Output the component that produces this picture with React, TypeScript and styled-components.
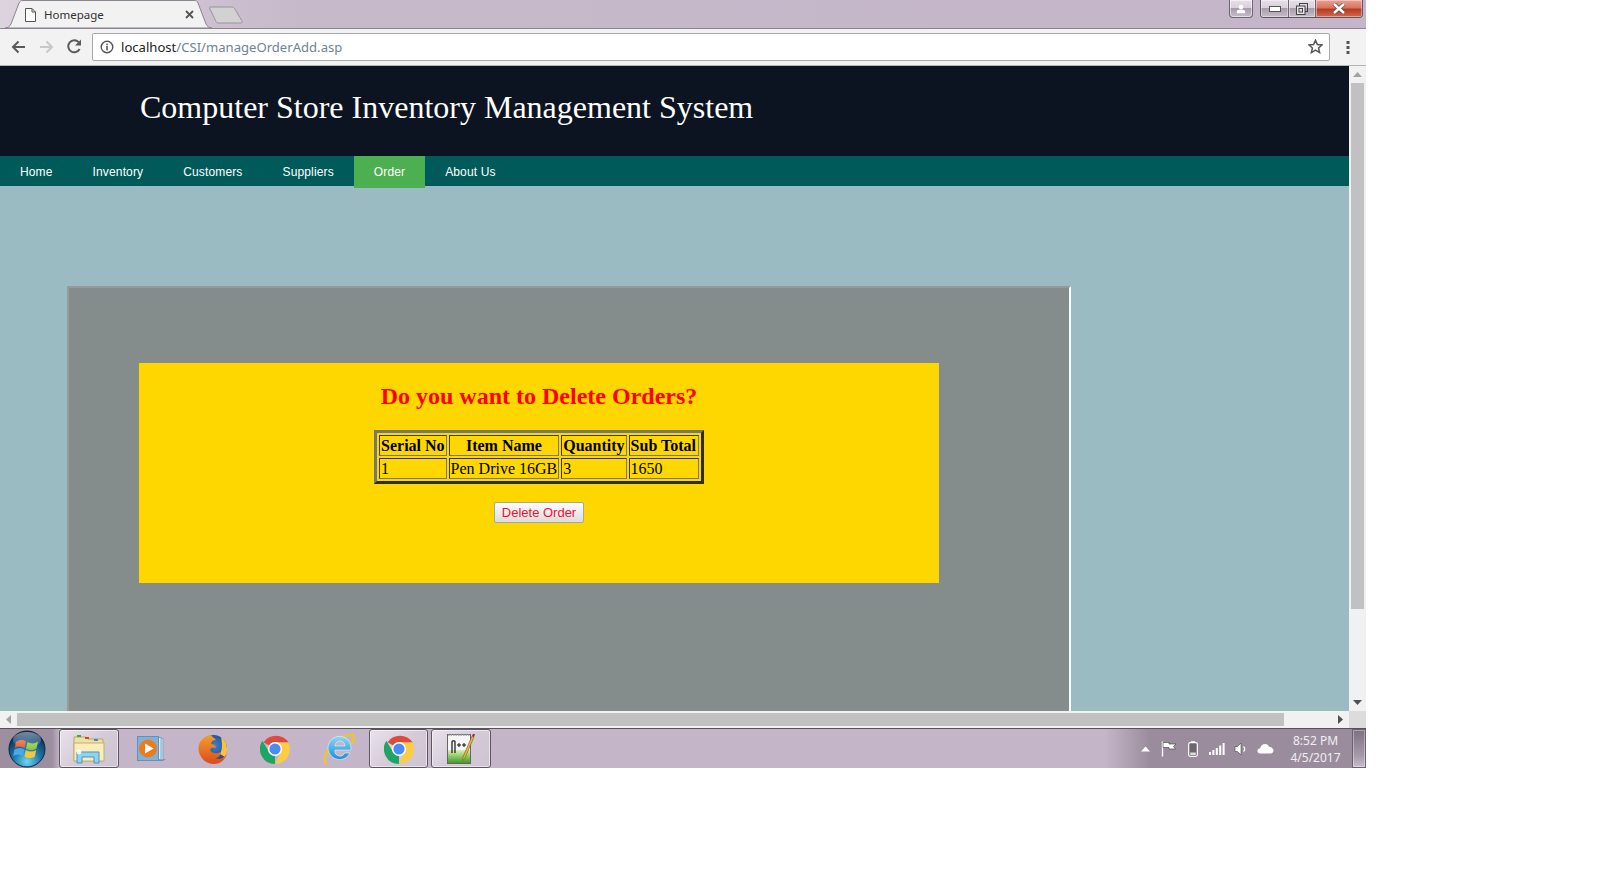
import React from "react";
import styled, { createGlobalStyle } from "styled-components";

const Global = createGlobalStyle`
  html, body { margin: 0; padding: 0; background: #fff; }
  body { width: 1600px; height: 873px; overflow: hidden; font-family: "Liberation Sans", Arial, sans-serif; }
`;

const Screen = styled.div`
  width: 1366px; height: 768px; display: flex; flex-direction: column; overflow: hidden;
`;

/* ---------- browser chrome ---------- */
const TabStrip = styled.div`
  height: 29px; flex: none; display: flex; align-items: flex-start; box-sizing: border-box;
  background: linear-gradient(90deg, #dcd3df 0, #c6b9ca 22%, #c4b6c8 100%);
  border-bottom: 1px solid #8c8490;
`;
const Tab = styled.div`
  position: relative; width: 207px; height: 28px; margin-left: 5px; flex: none;
  display: flex; align-items: center; padding: 1px 0 0 20px; box-sizing: border-box;
  font: 11.5px "Noto Sans", "Open Sans", sans-serif; color: #333;
`;
const TabShape = styled.svg`
  position: absolute; left: 0; top: 0;
`;
const TabIcon = styled.svg`
  position: relative; flex: none; margin-right: 8px;
`;
const TabTitle = styled.span`
  position: relative; flex: 1;
`;
const TabClose = styled.svg`
  position: relative; flex: none; margin-right: 18px;
`;
const NewTab = styled.svg`
  flex: none; margin: 6px 0 0 -3px;
`;
const Spacer = styled.div`
  flex: 1;
`;
const CaptionProfile = styled.div`
  width: 24px; height: 18px; box-sizing: border-box; margin-right: 7px; display: flex; align-items: center; justify-content: center;
  border: 1px solid #6e6672; border-top: none; border-radius: 0 0 4px 4px;
  box-shadow: inset 0 0 0 1px rgba(255,255,255,.55);
  background: linear-gradient(#e6dfe8 0, #d9d0db 45%, #a89cab 50%, #c6bcc8 100%);
`;
const CaptionGroup = styled.div`
  width: 103px; height: 18px; box-sizing: border-box; margin-right: 3px; display: flex;
  border: 1px solid #5c5560; border-top: none; border-radius: 0 0 4px 4px; overflow: hidden;
`;
const CaptionButton = styled.div<{ $w: number; $close?: boolean }>`
  width: ${p => p.$w}px; flex: ${p => (p.$close ? "1" : "none")}; display: flex; align-items: center; justify-content: center; box-sizing: border-box;
  border-right: ${p => (p.$close ? "none" : "1px solid #6e6672")};
  background: ${p => p.$close
    ? "linear-gradient(#e9a294 0, #d9735f 45%, #b83a22 55%, #cf6a50 100%)"
    : "linear-gradient(#e6dfe8 0, #d9d0db 45%, #a89cab 50%, #c6bcc8 100%)"};
  box-shadow: inset 0 0 0 1px rgba(255,255,255,.4);
`;

const Toolbar = styled.div`
  height: 37px; flex: none; box-sizing: border-box; background: #f2f2f2; display: flex; align-items: center;
  border-bottom: 1px solid #b4b4b4; padding: 0 0 1px 11px;
`;
const NavIcon = styled.svg`
  flex: none; margin-right: 13px;
`;
const Omnibox = styled.div`
  width: 1238px; height: 28px; flex: none; margin-left: -3px; box-sizing: border-box; background: #fff;
  border: 1px solid #a9a9a9; border-radius: 2px; display: flex; align-items: center; padding: 0 6px 0 7px;
`;
const UrlInfo = styled.svg`
  flex: none; margin-right: 7px;
`;
const Url = styled.div`
  flex: 1; font: 13.1px "Noto Sans", "Open Sans", sans-serif; color: #6f8490; white-space: nowrap;
`;
const UrlHost = styled.span`
  color: #222;
`;
const MenuDots = styled.svg`
  flex: none; margin-left: 16px;
`;

/* ---------- viewport ---------- */
const Viewport = styled.div`
  flex: 1; min-height: 0; display: flex;
`;
const ViewColumn = styled.div`
  flex: 1; min-width: 0; display: flex; flex-direction: column;
`;
const Page = styled.div`
  flex: 1; min-height: 0; overflow: hidden; background: #9abbc1;
`;
const Header = styled.header`
  height: 90px; background: #0c1421; box-sizing: border-box; padding: 19px 0 0 140px;
`;
const Title = styled.h1`
  margin: 0; font: 400 32px/44px "Liberation Serif", "Times New Roman", serif; color: #fff; white-space: nowrap;
`;
const Nav = styled.nav`
  height: 30px; background: #005a5a; display: flex; align-items: flex-start;
`;
const NavItem = styled.a<{ $active?: boolean }>`
  padding: 0 20px; height: ${p => (p.$active ? 32 : 30)}px; flex: none;
  font: 12px/33px "Liberation Sans", Arial, sans-serif; letter-spacing: .14px; color: #fff;
  background: ${p => (p.$active ? "#4caf50" : "transparent")};
`;
const Panel = styled.section`
  width: 1004px; height: 600px; margin: 100px 0 0 67px; box-sizing: border-box; background: #858c8c;
  border: 2px solid #999; border-right-color: #fff; border-bottom: none;
  padding: 75px 0 0 70px;
`;
const Card = styled.div`
  width: 800px; height: 220px; background: #ffd700; display: flex; flex-direction: column; align-items: center; padding-top: 19px; box-sizing: border-box;
`;
const Question = styled.h2`
  margin: 0 0 20px; font: 700 24px/28px "Liberation Serif", "Times New Roman", serif; color: #f00;
`;
const OrderTable = styled.table`
  border: 3px solid; border-color: #777 #2c2c2c #2c2c2c #777; border-spacing: 2px; border-collapse: separate;
  font: 16px/17px "Liberation Serif", "Times New Roman", serif; color: #000;
`;
const HeadCell = styled.th<{ $padRight?: number }>`
  border: 1px solid; border-color: #333 #777 #777 #333; padding: 1px ${p => p.$padRight ?? 1}px 1px 1px; font-weight: 700; white-space: nowrap;
`;
const Cell = styled.td`
  border: 1px solid; border-color: #333 #777 #777 #333; padding: 1px; white-space: nowrap;
`;
const DeleteButton = styled.button`
  margin-top: 18px; width: 90px; height: 21px; padding: 0; box-sizing: border-box;
  font: 13px "Liberation Sans", Arial, sans-serif; color: #f01030;
  border: 1px solid #a6a6a6; border-radius: 2px; background: linear-gradient(#fdfdfd, #dcdcdc);
`;

/* ---------- scrollbars ---------- */
const HScroll = styled.div`
  height: 17px; flex: none; background: #f1f1f1; display: flex; align-items: center;
`;
const HThumb = styled.div`
  width: 1267px; height: 13px; background: #c1c1c1; flex: none;
`;
const ScrollArrow = styled.svg`
  flex: none; display: block;
`;
const ArrowSlot = styled.div`
  width: 17px; height: 17px; flex: none; display: flex; align-items: center; justify-content: center;
`;
const VScroll = styled.div`
  width: 17px; flex: none; background: #f1f1f1; display: flex; flex-direction: column; align-items: center;
`;
const VThumb = styled.div`
  width: 13px; height: 526px; background: #c1c1c1; flex: none;
`;
const VTrack = styled.div`
  flex: 1;
`;
const Corner = styled.div`
  height: 17px; width: 17px; flex: none; background: #dcdcdc;
`;

/* ---------- taskbar ---------- */
const Taskbar = styled.div`
  height: 40px; flex: none; display: flex; align-items: stretch; box-sizing: border-box;
  border-top: 1px solid #55505a;
  background: linear-gradient(90deg, #9d8f9f 0, #9d8f9f 52px, #c4b6c8 60px, #c4b6c8 1105px, #9a8c9c 1150px, #9a8c9c 100%);
`;
const Orb = styled.div`
  width: 59px; flex: none; display: flex; align-items: center; padding-left: 8px; box-sizing: border-box;
`;
const TaskButton = styled.div<{ $active?: boolean; $w?: number; $gap?: number }>`
  width: ${p => p.$w ?? 60}px; flex: none; margin-right: ${p => p.$gap ?? 0}px; display: flex; align-items: center; justify-content: center; box-sizing: border-box;
  border-radius: 3px;
  ${p => p.$active ? `
    border: 1px solid #5d5762;
    box-shadow: inset 0 0 0 1px rgba(255,255,255,.5);
    background: linear-gradient(135deg, #e8e2ea 0, #d4cad7 55%, #cfc4d2 100%);
  ` : ""}
`;
const Tray = styled.div`
  flex: 1; display: flex; align-items: stretch; justify-content: flex-end;
`;
const TraySlot = styled.div`
  width: 24px; flex: none; display: flex; align-items: center; justify-content: center;
`;
const Clock = styled.div`
  width: 75px; flex: none; align-self: center; box-sizing: border-box; padding-left: 2px; text-align: center; font: 12px/17px "Noto Sans", "Open Sans", sans-serif; color: #f1eef2;
`;
const ShowDesktop = styled.div`
  width: 14px; flex: none; box-sizing: border-box; border: 1px solid #6a626e;
  box-shadow: inset 0 0 0 1px rgba(255,255,255,.35);
  background: linear-gradient(#7d7080, #a79aaa 70%, #c8bccb);
`;

const ChromeIcon = () => (
  <svg width="30" height="30" viewBox="0 0 30 30">
    <path d="M15 15 L3.6 8.2 A15 15 0 0 1 28.6 8.6 L15 8.6 Z" fill="#dd4b3e" />
    <path d="M15 15 L15 30 A15 15 0 0 1 2.4 6.8 L9.3 18.4 Z" fill="#1fa463" />
    <path d="M15 8.6 L28.4 8.6 A15 15 0 0 1 15.2 30 L20.6 18.2 Z" fill="#fdcd3f" />
    <circle cx="15" cy="15" r="7" fill="#fff" />
    <circle cx="15" cy="15" r="5.6" fill="#4b8bf4" />
  </svg>
);

export default function App() {
  return (
    <>
      <Global />
      <Screen>
        <TabStrip>
          <Tab>
            <TabShape width="207" height="28" viewBox="0 0 207 28">
              <path d="M0 28 C3 28 5 26 6 24 L14 3 C15 1 16 .5 18 .5 L189 .5 C191 .5 192 1 193 3 L201 24 C202 26 204 28 207 28 Z" fill="#f2f2f2" stroke="#8c8490" />
            </TabShape>
            <TabIcon width="11" height="14" viewBox="0 0 11 14">
              <path d="M1 .5 H7 L10.5 4 V13.5 H.5 V.5 Z M7 .5 V4 H10.5" fill="#fff" stroke="#555" />
            </TabIcon>
            <TabTitle>Homepage</TabTitle>
            <TabClose width="9" height="9" viewBox="0 0 9 9">
              <path d="M1 1 L8 8 M8 1 L1 8" stroke="#555" strokeWidth="1.8" />
            </TabClose>
          </Tab>
          <NewTab width="35" height="18" viewBox="0 0 35 18">
            <path d="M.8 1 H23 C24 1 25 1.5 25.5 2.5 L33 15 C33.5 16 33 17 32 17 H9 C8 17 7.5 16.5 7 15.5 L.5 2 C.2 1.4 .3 1 .8 1 Z" fill="#d2d2d2" stroke="#9a949e" />
          </NewTab>
          <Spacer />
          <CaptionProfile>
            <svg width="10" height="10" viewBox="0 0 12 11">
              <circle cx="6" cy="3.2" r="2.8" fill="#fff" />
              <path d="M1 10.5 V8.5 C1 7 3 6.5 6 6.5 C9 6.5 11 7 11 8.5 V10.5 Z" fill="#fff" />
            </svg>
          </CaptionProfile>
          <CaptionGroup>
            <CaptionButton $w={28}>
              <svg width="12" height="6" viewBox="0 0 12 6"><rect x=".5" y=".5" width="11" height="5" fill="#fff" stroke="#555" /></svg>
            </CaptionButton>
            <CaptionButton $w={27}>
              <svg width="12" height="12" viewBox="0 0 12 12">
                <rect x="3.5" y=".5" width="8" height="8" fill="none" stroke="#444" />
                <rect x=".5" y="3" width="8.5" height="8.5" fill="#e8e2ea" stroke="#444" />
                <rect x="3" y="5.5" width="3.5" height="3.5" fill="none" stroke="#444" />
              </svg>
            </CaptionButton>
            <CaptionButton $w={48} $close>
              <svg width="14" height="11" viewBox="0 0 14 11">
                <path d="M2 1 L12 10 M12 1 L2 10" stroke="#555" strokeWidth="4" />
                <path d="M2 1 L12 10 M12 1 L2 10" stroke="#fff" strokeWidth="2.4" />
              </svg>
            </CaptionButton>
          </CaptionGroup>
        </TabStrip>

        <Toolbar>
          <NavIcon width="15" height="14" viewBox="0 0 15 14">
            <path d="M14 7 H2.5 M7.5 1.5 L2 7 L7.5 12.5" fill="none" stroke="#5a5a5a" strokeWidth="2" />
          </NavIcon>
          <NavIcon width="15" height="14" viewBox="0 0 15 14">
            <path d="M1 7 H12.5 M7.5 1.5 L13 7 L7.5 12.5" fill="none" stroke="#c8c8c8" strokeWidth="2" />
          </NavIcon>
          <NavIcon width="15" height="15" viewBox="0 0 15 15">
            <path d="M12.6 10 A6 6 0 1 1 11.7 3.2" fill="none" stroke="#5a5a5a" strokeWidth="2" />
            <path d="M14 .5 V6.6 H8 Z" fill="#5a5a5a" />
          </NavIcon>
          <Omnibox>
            <UrlInfo width="14" height="14" viewBox="0 0 14 14">
              <circle cx="7" cy="7" r="5.8" fill="none" stroke="#555" strokeWidth="1.4" />
              <rect x="6.2" y="6" width="1.6" height="4.4" fill="#555" />
              <rect x="6.2" y="3.6" width="1.6" height="1.6" fill="#555" />
            </UrlInfo>
            <Url><UrlHost>localhost</UrlHost>/CSI/manageOrderAdd.asp</Url>
            <svg width="15" height="15" viewBox="0 0 15 15">
              <path d="M7.5 1.2 L9.4 5.5 L14 6 L10.6 9 L11.6 13.6 L7.5 11.2 L3.4 13.6 L4.4 9 L1 6 L5.6 5.5 Z" fill="none" stroke="#555" strokeWidth="1.5" />
            </svg>
          </Omnibox>
          <MenuDots width="4" height="14" viewBox="0 0 4 14">
            <rect x=".5" y="1" width="3" height="3" fill="#555" />
            <rect x=".5" y="6" width="3" height="3" fill="#555" />
            <rect x=".5" y="11" width="3" height="3" fill="#555" />
          </MenuDots>
        </Toolbar>

        <Viewport>
          <ViewColumn>
            <Page>
              <Header><Title>Computer Store Inventory Management System</Title></Header>
              <Nav>
                <NavItem>Home</NavItem>
                <NavItem>Inventory</NavItem>
                <NavItem>Customers</NavItem>
                <NavItem>Suppliers</NavItem>
                <NavItem $active>Order</NavItem>
                <NavItem>About Us</NavItem>
              </Nav>
              <Panel>
                <Card>
                  <Question>Do you want to Delete Orders?</Question>
                  <OrderTable>
                    <thead>
                      <tr>
                        <HeadCell>Serial No</HeadCell>
                        <HeadCell>Item Name</HeadCell>
                        <HeadCell>Quantity</HeadCell>
                        <HeadCell $padRight={2}>Sub Total</HeadCell>
                      </tr>
                    </thead>
                    <tbody>
                      <tr>
                        <Cell>1</Cell>
                        <Cell>Pen Drive 16GB</Cell>
                        <Cell>3</Cell>
                        <Cell>1650</Cell>
                      </tr>
                    </tbody>
                  </OrderTable>
                  <DeleteButton>Delete Order</DeleteButton>
                </Card>
              </Panel>
            </Page>
            <HScroll>
              <ArrowSlot><ScrollArrow width="5" height="9" viewBox="0 0 5 9"><path d="M5 0 V9 L0 4.5 Z" fill="#a3a3a3" /></ScrollArrow></ArrowSlot>
              <HThumb />
              <Spacer />
              <ArrowSlot><ScrollArrow width="5" height="9" viewBox="0 0 5 9"><path d="M0 0 V9 L5 4.5 Z" fill="#505050" /></ScrollArrow></ArrowSlot>
            </HScroll>
          </ViewColumn>
          <VScroll>
            <ArrowSlot><ScrollArrow width="9" height="5" viewBox="0 0 9 5"><path d="M0 5 H9 L4.5 0 Z" fill="#a3a3a3" /></ScrollArrow></ArrowSlot>
            <VThumb />
            <VTrack />
            <ArrowSlot><ScrollArrow width="9" height="5" viewBox="0 0 9 5"><path d="M0 0 H9 L4.5 5 Z" fill="#505050" /></ScrollArrow></ArrowSlot>
            <Corner />
          </VScroll>
        </Viewport>

        <Taskbar>
          <Orb>
            <svg width="38" height="38" viewBox="0 0 38 38">
              <defs>
                <radialGradient id="orbg" cx="50%" cy="85%" r="75%">
                  <stop offset="0" stopColor="#6fd6f2" />
                  <stop offset=".5" stopColor="#1b78ab" />
                  <stop offset="1" stopColor="#0c2f58" />
                </radialGradient>
                <linearGradient id="orbgloss" x1="0" y1="0" x2="0" y2="1">
                  <stop offset="0" stopColor="#fff" stopOpacity=".45" />
                  <stop offset="1" stopColor="#fff" stopOpacity=".05" />
                </linearGradient>
              </defs>
              <circle cx="19" cy="19" r="18" fill="url(#orbg)" stroke="#0d2440" />
              <path d="M8 12 C11.5 9.5 15 9.5 18 11.5 L16.5 18 C13.5 16 10 16 6.8 18 Z" fill="#ea5a2e" />
              <path d="M19.5 12 C23 14 26.5 14 30 11.5 L28.5 18.5 C25 20.5 21.5 20.5 18 18.5 Z" fill="#8fc93f" />
              <path d="M6.5 19.5 C10 17.5 13 17.5 16.2 19.5 L15 26 C12 24 8.5 24 5.2 26 Z" fill="#4aa8e8" />
              <path d="M17.7 20 C21 22 24.5 22 28.2 20 L26.8 26.8 C23.5 28.6 20 28.6 16.5 26.5 Z" fill="#f6c63a" />
              <ellipse cx="19" cy="10" rx="14" ry="8" fill="url(#orbgloss)" />
            </svg>
          </Orb>
          <TaskButton $active>
            <svg width="32" height="30" viewBox="0 0 32 30">
              <path d="M1 3 H13 L15 5 H30 V27 H1 Z" fill="#efe2a0" stroke="#b9a765" />
              <path d="M1 9 H31 V27 H1 Z" fill="#f8edbb" stroke="#c4b06c" />
              <rect x="4" y="1" width="4" height="2" fill="#2bb34a" />
              <rect x="12" y="3" width="4" height="2" fill="#d6402c" />
              <rect x="21" y="5" width="4" height="2" fill="#2d8fe0" />
              <path d="M4 29 V18 H26 V29 H21 V23 H9 V29 Z" fill="#8fd2f2" stroke="#4a93c4" />
              <circle cx="6" cy="18" r="2.4" fill="#fff" opacity=".85" />
            </svg>
          </TaskButton>
          <TaskButton $w={66}>
            <svg width="30" height="26" viewBox="0 0 30 26">
              <path d="M22 23 H29 L26 25 H22 Z" fill="#8f8494" />
              <rect x="9" y="2.5" width="17" height="21" fill="#cfe1ef" stroke="#7fa8c6" />
              <rect x="7" y="1.5" width="17" height="22" fill="#dfeaf3" stroke="#7fa8c6" />
              <rect x=".5" y=".5" width="21" height="24" fill="#7fb2d6" stroke="#5e93bb" />
              <circle cx="11" cy="12.5" r="9" fill="#ee7a1a" />
              <path d="M8 7.5 L16.5 12.5 L8 17.5 Z" fill="#fff" />
            </svg>
          </TaskButton>
          <TaskButton $w={56}>
            <svg width="30" height="30" viewBox="0 0 30 30">
              <defs>
                <radialGradient id="fxglobe" cx="55%" cy="40%" r="60%">
                  <stop offset="0" stopColor="#3f7fd0" />
                  <stop offset="1" stopColor="#173f86" />
                </radialGradient>
                <linearGradient id="fxfox" x1="0" y1="0" x2="0" y2="1">
                  <stop offset="0" stopColor="#f2a02a" />
                  <stop offset="1" stopColor="#dd4a1c" />
                </linearGradient>
              </defs>
              <circle cx="15.5" cy="14.5" r="13.5" fill="url(#fxglobe)" />
              <path d="M23 3 C29 7 31 16 27 23 L22 20 C25 14 24 8 23 3 Z" fill="#f7c43a" />
              <path d="M13 1 C7 2 2 6 .6 12 C-.5 20 5 30 16 30 C23 30 28 25 29 19 C27 24 21 26 17 24 C21 24 23 21 22 18 C20 20 14 20 12 16 C13 13 16 14 18 14 C18 11 15 10 13 10 C13 8 15 6 18 6 C16 3 14 3 13 1 Z" fill="url(#fxfox)" />
            </svg>
          </TaskButton>
          <TaskButton $w={68}><ChromeIcon /></TaskButton>
          <TaskButton $w={60}>
            <svg width="32" height="32" viewBox="0 0 32 32">
              <defs>
                <linearGradient id="iee" x1="0" y1="0" x2="0" y2="1">
                  <stop offset="0" stopColor="#8ad8f7" />
                  <stop offset="1" stopColor="#1a8ed6" />
                </linearGradient>
              </defs>
              <path d="M4 31 C1 30 1 25 4 19 C8 11 17 4 25 2 C29 1 31 2 31 5 C31 7 30 9 28 11" fill="none" stroke="#f5c518" strokeWidth="2.2" />
              <path d="M7.5 22 A11.5 11.5 0 1 1 27.8 17 H12 A5 5 0 0 0 21.5 20 H27 A11.5 11.5 0 0 1 7.5 22 Z M12 13 H22 A5 5 0 0 0 12 13 Z" fill="url(#iee)" fillRule="evenodd" stroke="#fff" strokeWidth=".5" />
            </svg>
          </TaskButton>
          <TaskButton $active $w={59} $gap={3}><ChromeIcon /></TaskButton>
          <TaskButton $active $w={60}>
            <svg width="32" height="32" viewBox="0 0 32 32">
              <defs>
                <linearGradient id="nppg" x1="0" y1="0" x2="0" y2="1">
                  <stop offset="0" stopColor="#dcf0b4" />
                  <stop offset="1" stopColor="#3f9e1e" />
                </linearGradient>
              </defs>
              <rect x="2.5" y="1.5" width="23" height="29" fill="#f6f6f6" stroke="#666" />
              <path d="M3 2 H25" stroke="#999" strokeWidth="1.5" strokeDasharray="1.5 1" />
              <path d="M3 17 H25 V30 H3 Z" fill="url(#nppg)" />
              <path d="M7 20 V8.5 C7 7.5 10 7.5 10 8.5 V20" fill="none" stroke="#111" strokeWidth="1.2" />
              <path d="M12 12 H16 M14 10 V14 M17 12 H21 M19 10 V14" stroke="#111" strokeWidth="1" />
              <path d="M29 4 L20 25 L18 27.5 L18 24 L27 3 Z" fill="#e9b53a" stroke="#7a5a12" strokeWidth=".6" />
              <path d="M27 3 L29 4 L30 1.5 L28 .8 Z" fill="#a3263b" />
            </svg>
          </TaskButton>
          <Tray>
            <TraySlot><svg width="9" height="6" viewBox="0 0 9 6"><path d="M0 5.5 H9 L4.5 .5 Z" fill="#fff" /></svg></TraySlot>
            <TraySlot>
              <svg width="16" height="16" viewBox="0 0 16 16">
                <path d="M1.5 .5 V15.5" stroke="#fff" strokeWidth="1.4" />
                <path d="M2 1.5 H8 V3 H15 L12.5 5.5 L14.5 8 H8 V6.5 H2 Z" fill="#fff" stroke="#3e3842" strokeWidth=".6" />
              </svg>
            </TraySlot>
            <TraySlot>
              <svg width="10" height="16" viewBox="0 0 10 16">
                <rect x=".7" y="1.7" width="8.6" height="13.6" rx="1.5" fill="#6c6470" stroke="#fff" strokeWidth="1.2" />
                <rect x="3" y=".2" width="4" height="1.6" fill="#fff" />
                <rect x="2.2" y="11.5" width="5.6" height="2.5" fill="#ddd" />
              </svg>
            </TraySlot>
            <TraySlot>
              <svg width="16" height="12" viewBox="0 0 16 12">
                <rect x="0" y="9" width="2" height="3" fill="#fff" />
                <rect x="3.4" y="7" width="2" height="5" fill="#fff" />
                <rect x="6.8" y="5" width="2" height="7" fill="#fff" />
                <rect x="10.2" y="2.5" width="2" height="9.5" fill="#fff" />
                <rect x="13.6" y="0" width="2" height="12" fill="#fff" />
              </svg>
            </TraySlot>
            <TraySlot>
              <svg width="14" height="14" viewBox="0 0 14 14">
                <path d="M1 4.5 H3.5 L7 1 V13 L3.5 9.5 H1 Z" fill="#fff" stroke="#444" strokeWidth=".6" />
                <path d="M9.5 4.5 C11 6 11 8 9.5 9.5" fill="none" stroke="#fff" strokeWidth="1.2" />
              </svg>
            </TraySlot>
            <TraySlot>
              <svg width="17" height="11" viewBox="0 0 17 11">
                <path d="M3.5 10.5 C1 10.5 .3 8.8 .5 7.5 C.7 6 2 5.5 3 5.6 C3.5 3 5.5 1 8 1 C10 1 11.5 2.2 12 3.8 C14.8 3.8 16.5 5.8 16.5 7.6 C16.5 9.5 15 10.5 13.5 10.5 Z" fill="#fff" />
              </svg>
            </TraySlot>
            <Clock>8:52 PM<br />4/5/2017</Clock>
            <ShowDesktop />
          </Tray>
        </Taskbar>
      </Screen>
    </>
  );
}
